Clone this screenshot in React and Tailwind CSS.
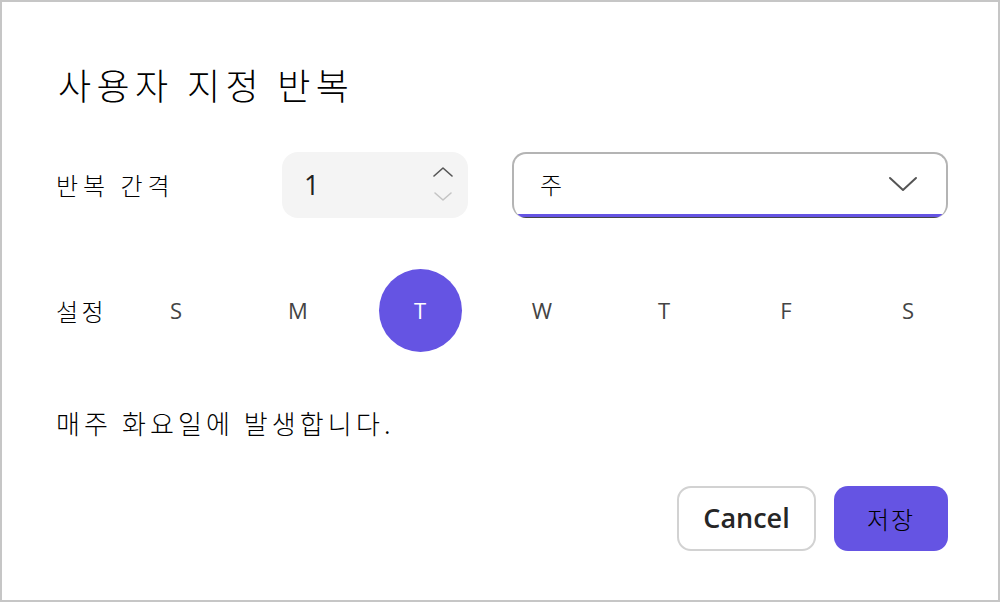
const days = ["S", "M", "T", "W", "T", "F", "S"];
const KR = { fontFamily: '"Noto Sans CJK KR", "Noto Sans", sans-serif' };
const LAT = { fontFamily: '"Open Sans", "Noto Sans CJK KR", sans-serif' };

function Spinner() {
  return (
    <svg width="22" height="36" viewBox="0 0 22 36" fill="none" strokeWidth="1.6" strokeLinecap="round" strokeLinejoin="round">
      <polyline points="2,9 11,1 20,9" stroke="#555" />
      <polyline points="3,26 11,33 19,26" stroke="#c4c4c4" />
    </svg>
  );
}

function Chevron() {
  return (
    <svg width="30" height="16" viewBox="0 0 30 16" fill="none" stroke="#555" strokeWidth="2" strokeLinecap="round" strokeLinejoin="round">
      <polyline points="2,2 15,14 28,2" />
    </svg>
  );
}

export default function App() {
  const selected = 2;

  return (
    <div className="w-[1000px] h-[602px] border-2 border-[#c6c6c6] bg-white flex flex-col pl-[54px] pr-[50px] text-black" style={KR}>
      {/* title */}
      <h1 className="mt-[58px] h-[48px] flex items-center text-[36px] font-light pl-[2px] tracking-[5.4px]">사용자 지정 반복</h1>

      {/* interval */}
      <div className="mt-[44px] flex items-center h-[66px]">
        <div className="w-[226px] shrink-0 text-[24px] font-light tracking-[5px]">반복 간격</div>
        <div className="w-[186px] shrink-0 h-[66px] rounded-[16px] bg-[#f4f4f4] flex items-center pl-[22px] pr-[14px]">
          <span className="flex-1 text-[27px] text-[#222]" style={LAT}>1</span>
          <Spinner />
        </div>
        <div className="ml-[44px] flex-1 h-[66px] rounded-[14px] border-2 border-[#b4b4b4] border-b-0 overflow-hidden flex flex-col">
          <div className="flex-1 flex items-center pl-[26px] pr-[28px]">
            <span className="flex-1 text-[24px] font-light">주</span>
            <Chevron />
          </div>
          <div className="h-[3px] bg-[#6554e3]" />
          <div className="h-[1px] bg-[#444]" />
        </div>
      </div>

      {/* days */}
      <div className="mt-[51px] flex items-center h-[83px]">
        <div className="w-[59px] shrink-0 text-[24px] font-light tracking-[3.4px]">설정</div>
        {days.map((d, i) => (
          <div key={i} className="w-[122px] flex justify-center shrink-0">
            {i === selected ? (
              <div className="w-[83px] h-[83px] rounded-full bg-[#6554e3] text-white flex items-center justify-center text-[22px]" style={LAT}>
                {d}
              </div>
            ) : (
              <span className="text-[22px] text-[#444]" style={LAT}>{d}</span>
            )}
          </div>
        ))}
      </div>

      <p className="mt-[53px] text-[26px] font-light leading-[36px] tracking-[4.1px]">매주 화요일에 발생합니다.</p>

      {/* actions */}
      <div className="mt-[45px] flex justify-end gap-[18px]">
        <button className="w-[139px] h-[65px] rounded-[14px] border-2 border-[#d2d2d2] bg-white text-[27px] font-semibold text-[#262626]" style={LAT}>
          Cancel
        </button>
        <button className="w-[114px] h-[65px] rounded-[14px] bg-[#6554e3] text-[24px] font-light text-black tracking-[2px]">
          저장
        </button>
      </div>
    </div>
  );
}
